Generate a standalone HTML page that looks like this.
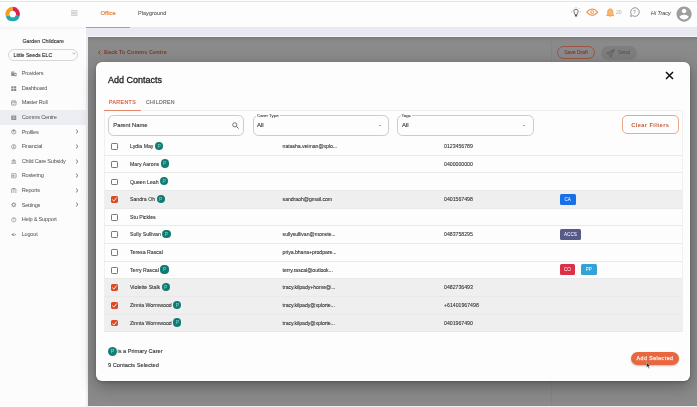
<!DOCTYPE html>
<html><head><meta charset="utf-8">
<style>
*{box-sizing:border-box;margin:0;padding:0}
html,body{width:697px;height:407px;overflow:hidden;background:#fbfbfc;font-family:"Liberation Sans",sans-serif;color:#333}
.a{position:absolute}
#hdr{left:0;top:0;width:697px;height:27px;background:#fdfdfe}
#topline{left:0;top:1px;width:697px;height:1px;background:#e6e6e8}
#side{left:0;top:27px;width:86px;height:380px;background:linear-gradient(#f1f1f3 0,#fafafb 2px,#fcfcfd 4px)}
#band{left:86px;top:27px;width:611px;height:380px;background:linear-gradient(#e4e5eb 0,#e9eaf1 1.5px,#eeeef3 100%)}
#ov{left:88px;top:37px;width:609px;height:368.5px;background:linear-gradient(#777778 0,#858586 2px,#8a8a8b 5px,#8a8a8b 100%)}
.nav{left:0;width:86px;height:14.6px;font-size:5.6px;color:#505050;line-height:14.6px;letter-spacing:-0.22px}
.nav .ic{position:absolute;left:11px;top:4.9px}
.nav .tx{position:absolute;left:21.7px;top:0}
.nav .ch{position:absolute;left:75.2px;top:4.8px}
#modal{left:96px;top:62px;width:594px;height:319px;background:#fdfdfe;border-radius:6px;box-shadow:0 5px 16px rgba(0,0,0,.32),0 1px 3px rgba(0,0,0,.2)}
.row{position:absolute;left:104px;width:578px;height:17.65px;border-bottom:1px solid #e9e9e9;font-size:5.2px;color:#2e2e2e;line-height:17.2px;-webkit-text-stroke:0.08px #2e2e2e}
.row.sel{background:#efeff0}
.cb{position:absolute;left:7px;top:5px;width:6.8px;height:6.8px;border:1px solid #777;border-radius:1.2px}
.cb.on{background:#db4a22;border-color:#db4a22}
.cb svg{position:absolute;left:-1px;top:-1px}
.nm{position:absolute;left:26px;top:0}
.pb{display:inline-block;width:8.2px;height:8.2px;border-radius:50%;background:#107b73;color:#8fd0c8;-webkit-text-stroke:0;font-size:5px;line-height:8px;text-align:center;vertical-align:middle;margin-left:1.5px;position:relative;top:-0.9px}
.em{position:absolute;left:178.6px;top:0;letter-spacing:-0.06px}
.ph{position:absolute;left:340px;top:0}
.tag{position:absolute;top:2.4px;-webkit-text-stroke:0;height:11px;border-radius:1.5px;color:#fff;font-size:4.6px;line-height:11px;text-align:center}
</style></head><body style="will-change:transform">
<div id="hdr" class="a"></div>
<div id="topline" class="a"></div>
<!-- logo -->
<svg class="a" style="left:0;top:0" width="26" height="26" viewBox="0 0 26 26">
 <g fill="none" stroke-width="3.9">
  <path d="M7.68 15.8 A5.3 5.3 0 0 1 12.9 8.8" stroke="#f39c1e"/>
  <path d="M12.9 8.8 A5.3 5.3 0 0 1 17.72 15.8" stroke="#d9224f"/>
  <path d="M17.72 15.8 A5.3 5.3 0 0 1 7.68 15.8" stroke="#24a7b1"/>
 </g>
</svg>
<!-- hamburger -->
<svg class="a" style="left:71px;top:10px" width="6.5" height="6" viewBox="0 0 6.5 6"><path d="M0 0.7h6.5M0 2.3h6.5M0 3.8h6.5M0 5.3h6.5" stroke="#c4c4c4" stroke-width="0.9"/></svg>
<div class="a" style="left:100.5px;top:10px;font-size:5.9px;color:#f07a32;-webkit-text-stroke:0.15px #f07a32">Office</div>
<div class="a" style="left:138px;top:10px;font-size:5.6px;color:#5a5a5a;-webkit-text-stroke:0.08px #5a5a5a">Playground</div>
<div class="a" style="left:86px;top:26.8px;width:44px;height:1.2px;background:#f08a55;z-index:5"></div>

<!-- header right icons -->
<svg class="a" style="left:571px;top:6.5px" width="10" height="10" viewBox="0 0 10 10">
 <g stroke="#888" stroke-width="0.7" fill="none">
  <path d="M5 0.3v1M1.9 1.6l0.6 0.6M8.1 1.6l-0.6 0.6M0.4 4.9h1M8.6 4.9h1"/>
 </g>
 <path d="M4 8 V7.2 C4 6.3 2.9 5.8 2.9 4.4 A2.1 2.1 0 0 1 7.1 4.4 C7.1 5.8 6 6.3 6 7.2 V8Z" fill="none" stroke="#666" stroke-width="0.9"/>
 <rect x="3.9" y="7.8" width="2.2" height="1.7" fill="#555"/>
</svg>
<svg class="a" style="left:585.5px;top:8.3px" width="12.5" height="8.5" viewBox="0 0 12.5 8.5">
 <path d="M0.8 4.2 Q6.25 -2.2 11.7 4.2 Q6.25 10.6 0.8 4.2Z" fill="none" stroke="#f08c3e" stroke-width="1.05"/>
 <circle cx="6.25" cy="4.2" r="1.5" fill="none" stroke="#f08c3e" stroke-width="0.95"/>
</svg>
<svg class="a" style="left:605.8px;top:8.3px" width="8.5" height="9.5" viewBox="0 0 8.5 9.5">
 <path d="M4.25 0.9 C2.4 0.9 1.7 2.4 1.7 4.2 V6.3 L0.7 7.6 H7.8 L6.8 6.3 V4.2 C6.8 2.4 6.1 0.9 4.25 0.9Z" fill="#f8b878" stroke="#f29a42" stroke-width="0.9"/>
 <path d="M3.3 8.1 A1 1.1 0 0 0 5.2 8.1Z" fill="#f29a42"/>
</svg>
<div class="a" style="left:616px;top:8.8px;font-size:5px;color:#aaa">20</div>
<svg class="a" style="left:628.8px;top:7.3px" width="11" height="11" viewBox="0 0 11 11">
 <path d="M1.6 9.4 L2.3 7.3 A4.3 4.3 0 1 1 3.7 8.7 Z" fill="none" stroke="#888" stroke-width="0.9"/>
 <text x="5.5" y="7.2" font-size="5" text-anchor="middle" fill="#888" font-family="Liberation Sans">?</text>
</svg>
<div class="a" style="left:651px;top:10px;font-size:5.4px;color:#3a3a3a;font-style:italic">Hi Tracy</div>
<svg class="a" style="left:674.6px;top:4.6px" width="18.2" height="18.2" viewBox="0 0 24 24">
 <path fill="#9e9e9e" d="M12 2C6.48 2 2 6.48 2 12s4.48 10 10 10 10-4.48 10-10S17.52 2 12 2zm0 3c1.66 0 3 1.34 3 3s-1.34 3-3 3-3-1.34-3-3 1.34-3 3-3zm0 14.2c-2.5 0-4.71-1.28-6-3.22.03-1.99 4-3.08 6-3.08 1.99 0 5.97 1.09 6 3.08-1.29 1.94-3.5 3.22-6 3.22z"/>
</svg>

<!-- sidebar -->
<div id="side" class="a"></div>
<div class="a" style="left:22.5px;top:37.8px;font-size:5.3px;color:#333;-webkit-text-stroke:0.12px #333">Garden Childcare</div>
<div class="a" style="left:8px;top:48.5px;width:70px;height:12px;border:0.8px solid #d6d6d6;border-radius:6px;font-size:5.2px;color:#2a2a2a;line-height:10.5px;padding-left:4.5px;-webkit-text-stroke:0.12px #2a2a2a">Little Seeds ELC</div>
<svg class="a" style="left:72px;top:52px" width="4" height="3" viewBox="0 0 4 3"><path d="M0.5 0.6L2 2.1L3.5 0.6" fill="none" stroke="#999" stroke-width="0.7"/></svg>

<div class="a nav" style="top:66.2px"><svg class="ic" width="5.5" height="5.5" viewBox="0 0 10 10"><rect x="0.5" y="1" width="5.5" height="8" fill="#888"/><rect x="6.8" y="4" width="2.7" height="5" fill="none" stroke="#888" stroke-width="1.1"/><rect x="1.7" y="2.5" width="1.2" height="1.2" fill="#fff"/><rect x="3.6" y="2.5" width="1.2" height="1.2" fill="#fff"/></svg><span class="tx">Providers</span></div>
<div class="a nav" style="top:80.8px"><svg class="ic" width="5.5" height="5.5" viewBox="0 0 10 10"><rect x="0.5" y="0.5" width="4" height="4" fill="#888"/><rect x="5.5" y="0.5" width="4" height="4" fill="#888"/><rect x="0.5" y="5.5" width="4" height="4" fill="#888"/><rect x="5.5" y="5.5" width="4" height="4" fill="#888"/></svg><span class="tx">Dashboard</span></div>
<div class="a nav" style="top:95.4px"><svg class="ic" width="5.5" height="5.5" viewBox="0 0 10 10"><rect x="0.8" y="1.8" width="8.4" height="7.4" rx="1" fill="none" stroke="#888" stroke-width="1.3"/><path d="M0.8 4.2h8.4M3 0.5v2M7 0.5v2" stroke="#888" stroke-width="1.1"/><path d="M3 6.3l1.4 1.3 2.4-2.3" stroke="#888" stroke-width="1" fill="none"/></svg><span class="tx">Master Roll</span></div>
<div class="a nav" style="top:110.0px;background:#eceef4"><svg class="ic" width="5.5" height="5.5" viewBox="0 0 10 10"><rect x="0.5" y="1" width="9" height="8" fill="#888"/><path d="M1.5 3.5h7M1.5 6.2h7M5 2v6" stroke="#ddd" stroke-width="0.8"/></svg><span class="tx">Comms Centre</span></div>
<div class="a nav" style="top:124.6px"><svg class="ic" width="5.5" height="5.5" viewBox="0 0 10 10"><circle cx="5" cy="5.3" r="3.9" fill="none" stroke="#888" stroke-width="1.3"/><path d="M2 3.5 Q5 0.5 8 3.5" fill="#888"/><circle cx="5" cy="5" r="1.2" fill="#888"/></svg><span class="tx">Profiles</span><svg class="ch" width="4" height="5" viewBox="0 0 4 5"><path d="M1 0.6 L3 2.5 L1 4.4" fill="none" stroke="#666" stroke-width="0.9"/></svg></div>
<div class="a nav" style="top:139.2px"><svg class="ic" width="5.5" height="5.5" viewBox="0 0 10 10"><circle cx="5" cy="5" r="4" fill="none" stroke="#888" stroke-width="1.2"/><path d="M5 2.3v5.4M3.6 3.8h2.5M3.6 6.2h2.5" stroke="#888" stroke-width="1"/></svg><span class="tx">Financial</span><svg class="ch" width="4" height="5" viewBox="0 0 4 5"><path d="M1 0.6 L3 2.5 L1 4.4" fill="none" stroke="#666" stroke-width="0.9"/></svg></div>
<div class="a nav" style="top:153.8px"><svg class="ic" width="5.5" height="5.5" viewBox="0 0 10 10"><path d="M5 0.5 L9.5 3 H0.5Z" fill="#888"/><path d="M2 3.8v4M4 3.8v4M6 3.8v4M8 3.8v4" stroke="#888" stroke-width="1"/><rect x="0.5" y="8.2" width="9" height="1.3" fill="#888"/></svg><span class="tx">Child Care Subsidy</span><svg class="ch" width="4" height="5" viewBox="0 0 4 5"><path d="M1 0.6 L3 2.5 L1 4.4" fill="none" stroke="#666" stroke-width="0.9"/></svg></div>
<div class="a nav" style="top:168.4px"><svg class="ic" width="5.5" height="5.5" viewBox="0 0 10 10"><rect x="0.6" y="1.2" width="8.8" height="7.6" rx="1" fill="none" stroke="#888" stroke-width="1.2"/><rect x="2.6" y="3.2" width="2.6" height="3.6" fill="#888"/><path d="M6 4h2M6 6h2" stroke="#888" stroke-width="0.9"/></svg><span class="tx">Rostering</span><svg class="ch" width="4" height="5" viewBox="0 0 4 5"><path d="M1 0.6 L3 2.5 L1 4.4" fill="none" stroke="#666" stroke-width="0.9"/></svg></div>
<div class="a nav" style="top:183.0px"><svg class="ic" width="5.5" height="5.5" viewBox="0 0 10 10"><rect x="1" y="1.5" width="8" height="8" rx="0.8" fill="none" stroke="#888" stroke-width="1.2"/><rect x="3" y="0.3" width="4" height="2.2" fill="#888"/><path d="M3 5h4M3 7h4" stroke="#888" stroke-width="0.9"/></svg><span class="tx">Reports</span><svg class="ch" width="4" height="5" viewBox="0 0 4 5"><path d="M1 0.6 L3 2.5 L1 4.4" fill="none" stroke="#666" stroke-width="0.9"/></svg></div>
<div class="a nav" style="top:197.6px"><svg class="ic" width="5.5" height="5.5" viewBox="0 0 10 10"><circle cx="5" cy="5" r="2.8" fill="none" stroke="#888" stroke-width="1.6"/><path d="M5 0.5v2M5 7.5v2M0.5 5h2M7.5 5h2M1.8 1.8l1.4 1.4M6.8 6.8l1.4 1.4M8.2 1.8l-1.4 1.4M3.2 6.8l-1.4 1.4" stroke="#888" stroke-width="1.3"/></svg><span class="tx">Settings</span><svg class="ch" width="4" height="5" viewBox="0 0 4 5"><path d="M1 0.6 L3 2.5 L1 4.4" fill="none" stroke="#666" stroke-width="0.9"/></svg></div>
<div class="a nav" style="top:212.2px"><svg class="ic" width="5.5" height="5.5" viewBox="0 0 10 10"><circle cx="5" cy="5" r="4" fill="none" stroke="#888" stroke-width="1.1"/><path d="M3.6 4 Q3.6 2.6 5 2.6 Q6.4 2.6 6.4 3.8 Q6.4 4.6 5 5.2 V6" stroke="#888" stroke-width="1" fill="none"/><circle cx="5" cy="7.4" r="0.6" fill="#888"/></svg><span class="tx">Help &amp; Support</span></div>
<div class="a nav" style="top:226.8px"><svg class="ic" width="5.5" height="5.5" viewBox="0 0 10 10"><path d="M0.5 5 Q5 0.8 9.5 5 Q5 9.2 0.5 5Z" fill="#888"/><circle cx="6" cy="5" r="1.5" fill="#fff"/></svg><span class="tx">Logout</span></div>

<!-- main -->
<div id="band" class="a"></div>
<div class="a" style="left:86px;top:36px;width:611px;height:1px;background:#f7f7fa"></div>
<div id="ov" class="a"></div>
<div class="a" style="left:551px;top:37px;width:1px;height:368px;background:#848485"></div>
<svg class="a" style="left:97.5px;top:50px" width="3" height="5" viewBox="0 0 3 5"><path d="M2.4 0.5L0.7 2.5L2.4 4.5" fill="none" stroke="#7a3a28" stroke-width="0.9"/></svg>
<div class="a" style="left:104px;top:49.2px;font-size:5.4px;font-weight:bold;color:#7a3a28;letter-spacing:0.12px">Back To Comms Centre</div>
<div class="a" style="left:557px;top:46px;width:38px;height:13px;border:0.8px solid #9c5542;border-radius:7px;font-size:5px;color:#8a3e2e;text-align:center;line-height:11.5px;-webkit-text-stroke:0.15px #8a3e2e">Save Draft</div>
<div class="a" style="left:600.5px;top:46px;width:36px;height:13.5px;background:#7e7e7f;border-radius:7px;font-size:5px;color:#5c5c5c;line-height:13.5px;padding-left:17.5px;-webkit-text-stroke:0.15px #5c5c5c">Send</div>
<svg class="a" style="left:606px;top:48.5px" width="9" height="9" viewBox="0 0 9 9"><path d="M8.3 0.7 L0.7 4.2 L3.6 5.3 L4.7 8.3 Z M8.3 0.7 L3.6 5.3" fill="none" stroke="#5c5c5c" stroke-width="0.8" stroke-linejoin="round"/></svg>

<div id="modal" class="a"></div>
<div class="a" style="left:108px;top:74.5px;font-size:9px;color:#1e1e1e;-webkit-text-stroke:0.3px #1e1e1e">Add Contacts</div>
<svg class="a" style="left:665px;top:71px" width="9" height="9" viewBox="0 0 9 9"><path d="M1 1L8 8M8 1L1 8" stroke="#111" stroke-width="1.5"/></svg>

<div class="a" style="left:109px;top:99.3px;font-size:5.2px;color:#d9552c;letter-spacing:0.42px;-webkit-text-stroke:0.15px #d9552c">PARENTS</div>
<div class="a" style="left:146px;top:99.3px;font-size:5.2px;color:#666;letter-spacing:0.3px;-webkit-text-stroke:0.12px #666">CHILDREN</div>

<!-- table container -->
<div class="a" style="left:103.5px;top:110px;width:579px;height:222px;border:1px solid #f0f0f0;border-bottom:none"></div>
<div class="a" style="left:103.5px;top:109.6px;width:37.2px;height:1.2px;background:#e4866a"></div>

<div class="a" style="left:108px;top:115.2px;width:136px;height:20.6px;border:0.9px solid #cbcbcb;border-radius:5.5px;font-size:5.8px;color:#333;line-height:19px;padding-left:4.3px;-webkit-text-stroke:0.12px #333">Parent Name</div>
<svg class="a" style="left:232px;top:121.5px" width="7" height="7" viewBox="0 0 7 7"><circle cx="2.8" cy="2.8" r="2.1" fill="none" stroke="#666" stroke-width="0.9"/><path d="M4.3 4.3L6.6 6.6" stroke="#666" stroke-width="1"/></svg>

<div class="a" style="left:253px;top:115.2px;width:136px;height:20.6px;border:0.9px solid #cbcbcb;border-radius:5.5px"></div>
<div class="a" style="left:256px;top:113px;padding:0 1px;background:#fefefe;font-size:4.4px;color:#444;-webkit-text-stroke:0.1px #444">Carer Type</div>
<div class="a" style="left:257px;top:121.5px;font-size:6px;color:#333;-webkit-text-stroke:0.12px #333">All</div>
<div class="a" style="left:378.8px;top:124.8px;width:0;height:0;border-left:1.6px solid transparent;border-right:1.6px solid transparent;border-top:1.7px solid #555"></div>

<div class="a" style="left:397px;top:115.2px;width:137px;height:20.6px;border:0.9px solid #cbcbcb;border-radius:5.5px"></div>
<div class="a" style="left:400.5px;top:113px;padding:0 1px;background:#fefefe;font-size:4.4px;color:#444;-webkit-text-stroke:0.1px #444">Tags</div>
<div class="a" style="left:402px;top:121.5px;font-size:6px;color:#333;-webkit-text-stroke:0.12px #333">All</div>
<div class="a" style="left:522.8px;top:124.8px;width:0;height:0;border-left:1.6px solid transparent;border-right:1.6px solid transparent;border-top:1.7px solid #555"></div>

<div class="a" style="left:622px;top:115px;width:56.5px;height:19px;border:0.9px solid #eaa88c;border-radius:5px;font-size:5.6px;color:#c65a35;font-weight:bold;letter-spacing:0.45px;text-align:center;line-height:18.5px">Clear Filters</div>

<!-- rows -->
<div class="row" style="top:138.20px"><span class="cb"></span><span class="nm">Lydia May<span class="pb">P</span></span><span class="em">natasha.veiman@xplo...</span><span class="ph">0123456789</span></div>
<div class="row" style="top:155.85px"><span class="cb"></span><span class="nm">Mary Aarons<span class="pb">P</span></span><span class="ph">0400000000</span></div>
<div class="row" style="top:173.50px"><span class="cb"></span><span class="nm">Queen Leah<span class="pb">P</span></span></div>
<div class="row sel" style="top:191.15px"><span class="cb on"><svg width="7" height="7" viewBox="0 0 7 7"><path d="M1.3 3.6L2.9 5.1L5.7 1.6" fill="none" stroke="#fff" stroke-width="0.9"/></svg></span><span class="nm">Sandra Oh<span class="pb">P</span></span><span class="em">sandraoh@gmail.com</span><span class="ph">0401567498</span><span class="tag" style="left:455.6px;width:16px;background:#1670e9">CA</span></div>
<div class="row" style="top:208.80px"><span class="cb"></span><span class="nm">Stu Pickles</span></div>
<div class="row" style="top:226.45px"><span class="cb"></span><span class="nm">Sully Sullivan<span class="pb">P</span></span><span class="em">sullysullivan@monste...</span><span class="ph">0483758295</span><span class="tag" style="left:455.6px;width:21.6px;background:#575a88">ACCS</span></div>
<div class="row" style="top:244.10px"><span class="cb"></span><span class="nm">Teresa Rascal</span><span class="em">priya.bhana+prodpare...</span></div>
<div class="row" style="top:261.75px"><span class="cb"></span><span class="nm">Terry Rascal<span class="pb">P</span></span><span class="em">terry.rascal@outlook...</span><span class="tag" style="left:455.6px;width:15.5px;background:#dc3049">CO</span><span class="tag" style="left:477px;width:15.5px;background:#33a3d6">PP</span></div>
<div class="row sel" style="top:279.40px"><span class="cb on"><svg width="7" height="7" viewBox="0 0 7 7"><path d="M1.3 3.6L2.9 5.1L5.7 1.6" fill="none" stroke="#fff" stroke-width="0.9"/></svg></span><span class="nm">Violette Stalk<span class="pb">P</span></span><span class="em">tracy.kilpady+home@...</span><span class="ph">0482736493</span></div>
<div class="row sel" style="top:297.05px"><span class="cb on"><svg width="7" height="7" viewBox="0 0 7 7"><path d="M1.3 3.6L2.9 5.1L5.7 1.6" fill="none" stroke="#fff" stroke-width="0.9"/></svg></span><span class="nm">Zinnia Wormwood<span class="pb">P</span></span><span class="em">tracy.kilpady@xplorte...</span><span class="ph">+61401967498</span></div>
<div class="row sel" style="top:314.70px"><span class="cb on"><svg width="7" height="7" viewBox="0 0 7 7"><path d="M1.3 3.6L2.9 5.1L5.7 1.6" fill="none" stroke="#fff" stroke-width="0.9"/></svg></span><span class="nm">Zinnia Wormwood<span class="pb">P</span></span><span class="em">tracy.kilpady@xplorte...</span><span class="ph">0401967490</span></div>

<!-- footer -->
<div class="a" style="left:108px;top:346.8px;width:9px;height:9px;border-radius:50%;background:#137e77;color:#9fd8d0;font-size:5.5px;line-height:9px;text-align:center">P</div>
<div class="a" style="left:117.5px;top:348px;font-size:5.6px;color:#2e2e2e;-webkit-text-stroke:0.1px #2e2e2e">is a Primary Carer</div>
<div class="a" style="left:108px;top:362px;font-size:5.7px;color:#2e2e2e;-webkit-text-stroke:0.1px #2e2e2e">9 Contacts Selected</div>
<div class="a" style="left:630.5px;top:352px;width:48px;height:13.3px;border-radius:7px;background:#e9673f;box-shadow:0 1px 2px rgba(0,0,0,.25);font-size:5.2px;color:#fbeae4;letter-spacing:0.5px;text-align:center;line-height:13.3px;padding-left:1px;-webkit-text-stroke:0.25px #fbeae4">Add Selected</div>
<svg class="a" style="left:645.5px;top:362px" width="5" height="7" viewBox="0 0 5 7"><path d="M0.5 0.5 L0.5 5.5 L1.8 4.4 L2.8 6.5 L3.6 6.1 L2.7 4.1 L4.3 4.1Z" fill="#222" stroke="#fff" stroke-width="0.4"/></svg>
</body></html>
